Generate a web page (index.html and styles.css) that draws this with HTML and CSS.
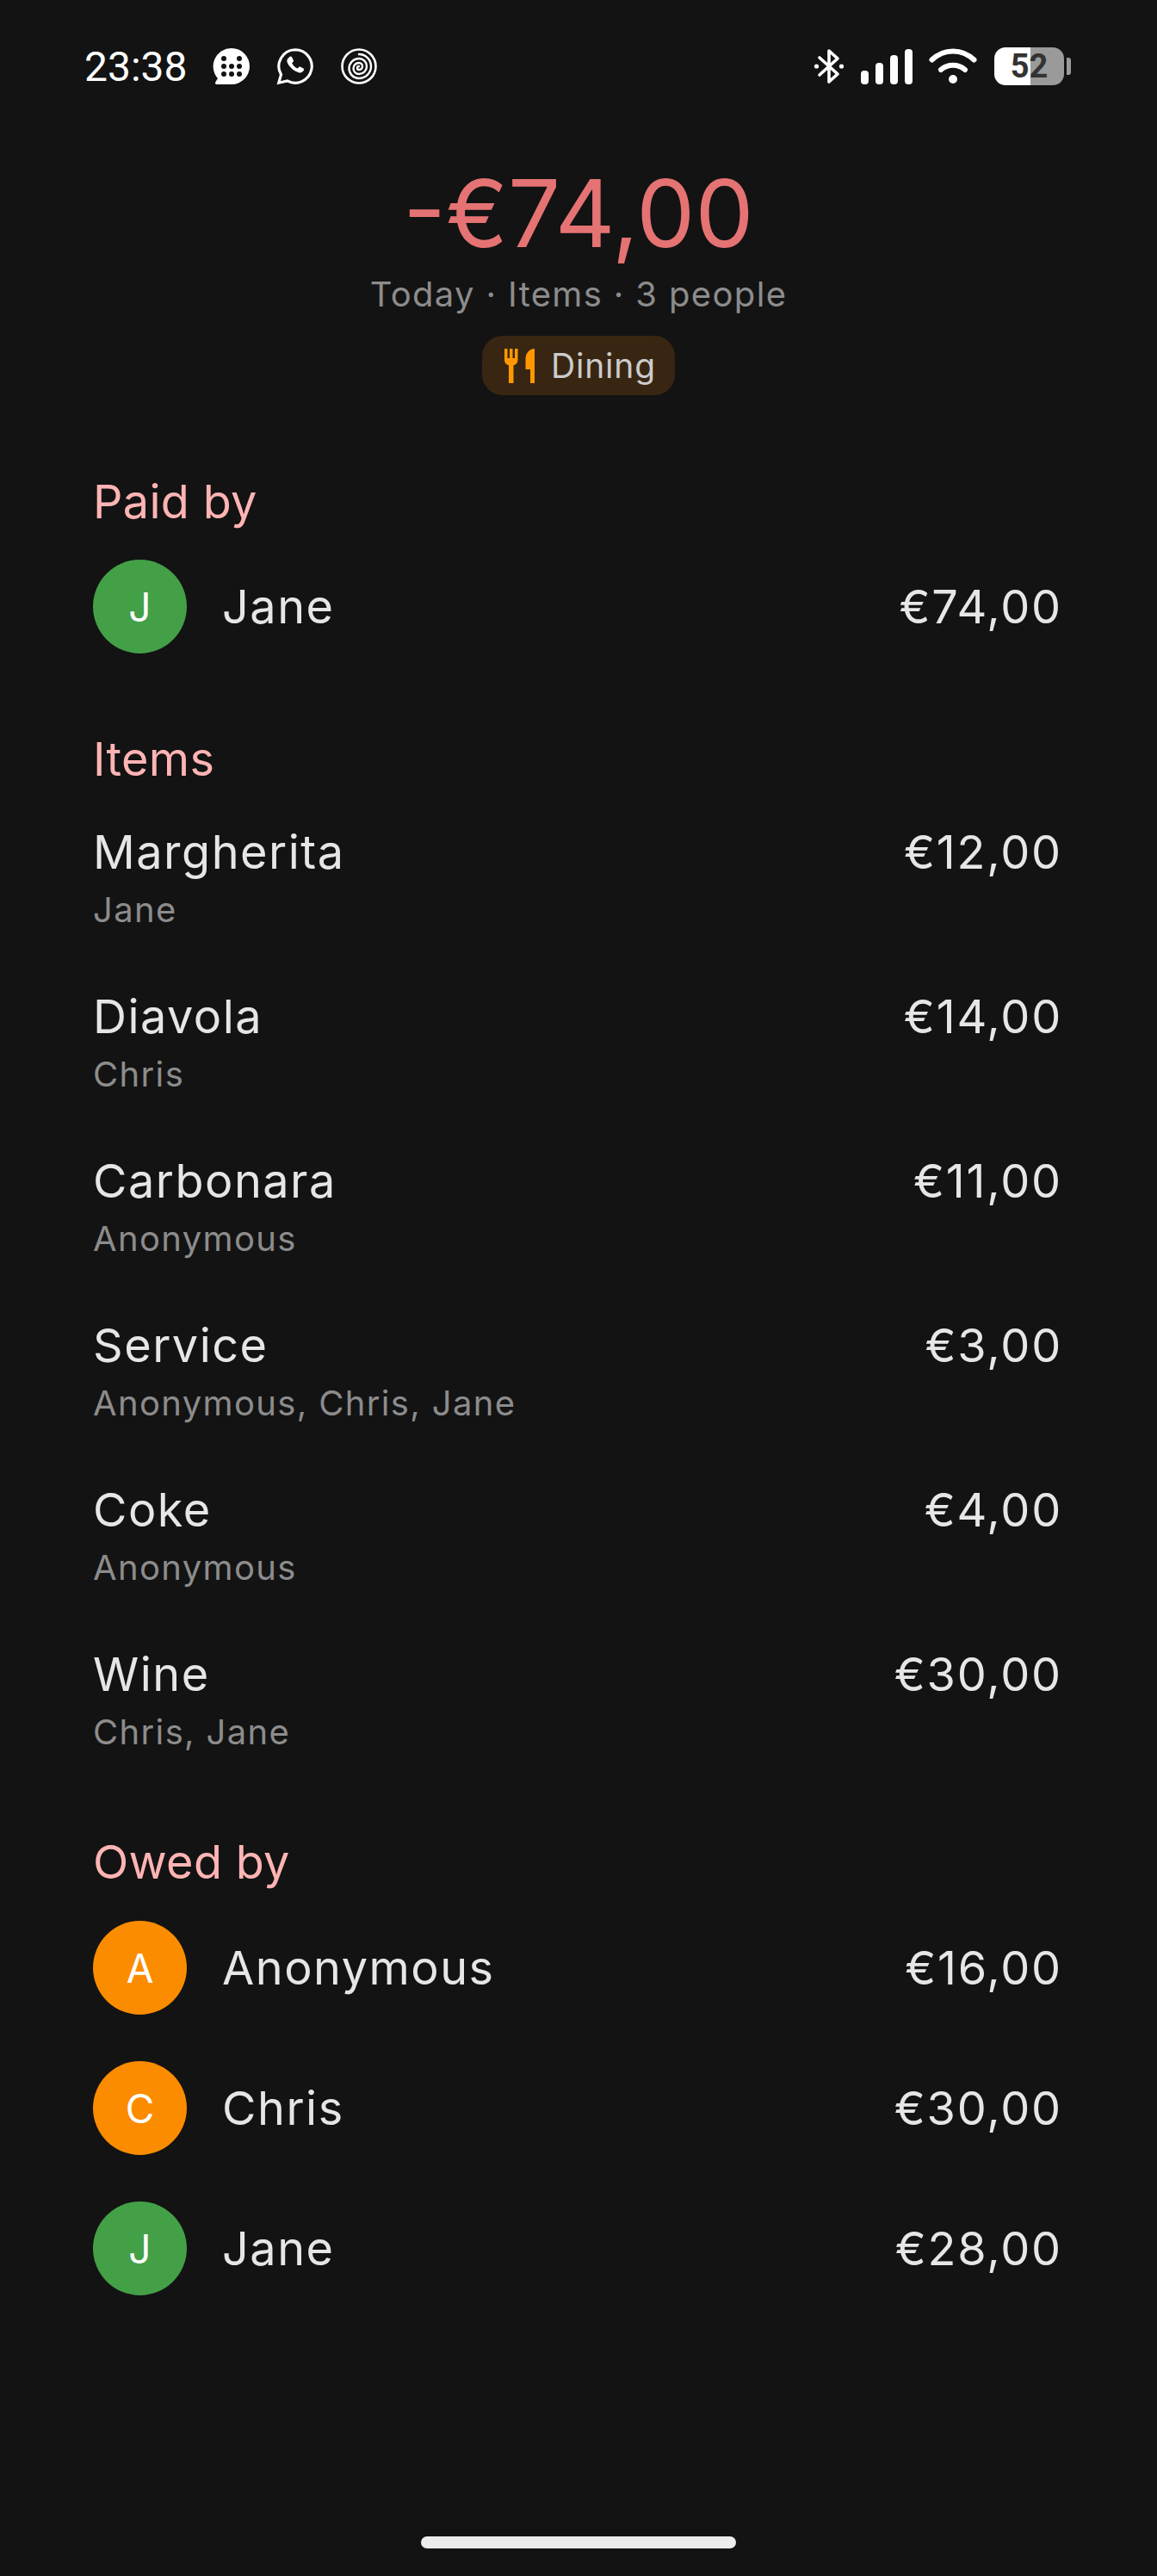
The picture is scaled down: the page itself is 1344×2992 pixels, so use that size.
FILE: index.html
```html
<!DOCTYPE html>
<html lang="en">
<head>
    <meta charset="UTF-8">
    <meta name="viewport" content="width=device-width, initial-scale=1.0">
    <title>Expense details</title>
    <link rel="stylesheet" href="styles.css">
</head>
<body>
    <div class="screen">
        <div class="status-bar">
            <div class="status-left">
                <span class="clock">23:38</span>
                <svg class="notif-icon" viewBox="0 0 44 44">
                    <path fill="#fff" d="M22 1a21 21 0 0 1 0 42H5c-2 0-2.500-1.500-1.500-3L6 36A21 21 0 0 1 22 1z"/>
                    <g fill="#131313">
                        <circle cx="13" cy="13" r="3"/><circle cx="31" cy="13" r="3"/>
                        <circle cx="13" cy="22" r="3"/><circle cx="22" cy="22" r="3"/><circle cx="31" cy="22" r="3"/>
                        <circle cx="13" cy="31" r="3"/><circle cx="22" cy="31" r="3"/><circle cx="31" cy="31" r="3"/>
                    </g>
                </svg>
                <svg class="notif-icon" viewBox="0 0 48 48">
                    <path fill="none" stroke="#fff" stroke-width="3.400" d="M24 3a21 21 0 1 1-10 39.500L3 45l3-10.500A21 21 0 0 1 24 3z"/>
                    <path fill="#fff" d="M17 12c1-.8 2-.6 2.600.3l2 3.700c.5.800.3 1.500-.3 2.200l-1.500 1.600c1.300 3 4 5.600 7 7l1.700-1.700c.6-.6 1.400-.7 2.200-.3l3.600 2c.9.600 1 1.600.4 2.500-1.400 2.300-3.700 3.400-6.400 2.600C21.500 30 15 23.600 13.600 18.400c-.6-2.500.8-5 3.400-6.400z"/>
                </svg>
                <svg class="notif-icon" viewBox="0 0 44 44">
                    <g fill="none" stroke="#fff" stroke-linecap="round">
                        <circle cx="22" cy="22" r="19.500" stroke-width="2.600"/>
                        <path stroke-width="2.400" d="M22 8A14 14 0 0 1 22 36A11.500 11.500 0 0 1 22 13A9 9 0 0 1 22 31A6.500 6.500 0 0 1 22 18A4 4 0 0 1 22 26A2 2 0 0 1 22 22"/>
                    </g>
                </svg>
            </div>
            <div class="status-right">
                <svg class="bt-icon" viewBox="0 0 36 42">
                    <path fill="none" stroke="#fff" stroke-width="3.600" stroke-linejoin="round" stroke-linecap="round" d="M7 11l21 19-10 9V3l10 9L7 31"/>
                    <circle cx="3.500" cy="21" r="2.600" fill="#fff"/><circle cx="32.500" cy="21" r="2.600" fill="#fff"/>
                </svg>
                <div class="signal">
                    <span class="bar bar-1"></span><span class="bar bar-2"></span><span class="bar bar-3"></span><span class="bar bar-4"></span>
                </div>
                <svg class="wifi-icon" viewBox="0 0 56 42">
                    <g fill="none" stroke="#fff" stroke-width="6" stroke-linecap="round">
                        <path d="M3.500 13.500c14-13.500 35-13.500 49 0"/>
                        <path d="M14 25c8-7 20-7 28 0"/>
                    </g>
                    <circle cx="28" cy="36" r="5" fill="#fff"/>
                </svg>
                <div class="battery">
                    <div class="battery-body"><span class="battery-level">52</span></div>
                    <span class="battery-tip"></span>
                </div>
            </div>
        </div>

        <div class="summary">
            <div class="total">-€74,00</div>
            <div class="meta">Today · Items · 3 people</div>
            <div class="chip">
                <svg class="chip-icon" viewBox="0 0 36 40">
                    <path fill="#ff9800" d="M0 0h3.500v11H6V0h3.500v11H12V0h3.500v13c0 3.500-2 5.500-5 6.200V40H5V19.200C2 18.500 0 16.500 0 13zM35 0v40h-5V24h-5.500V12C24.500 5 29 0 35 0z"/>
                </svg>
                <span>Dining</span>
            </div>
        </div>

        <div class="section section-paid">
            <div class="section-title">Paid by</div>
            <div class="person">
                <span class="avatar green">J</span>
                <span class="person-name">Jane</span>
                <span class="amount">€74,00</span>
            </div>
        </div>

        <div class="section section-items">
            <div class="section-title">Items</div>
            <div class="item">
                <div><div class="item-name">Margherita</div><div class="item-people">Jane</div></div>
                <span class="amount">€12,00</span>
            </div>
            <div class="item">
                <div><div class="item-name">Diavola</div><div class="item-people">Chris</div></div>
                <span class="amount">€14,00</span>
            </div>
            <div class="item">
                <div><div class="item-name">Carbonara</div><div class="item-people">Anonymous</div></div>
                <span class="amount">€11,00</span>
            </div>
            <div class="item">
                <div><div class="item-name">Service</div><div class="item-people">Anonymous, Chris, Jane</div></div>
                <span class="amount">€3,00</span>
            </div>
            <div class="item">
                <div><div class="item-name">Coke</div><div class="item-people">Anonymous</div></div>
                <span class="amount">€4,00</span>
            </div>
            <div class="item">
                <div><div class="item-name">Wine</div><div class="item-people">Chris, Jane</div></div>
                <span class="amount">€30,00</span>
            </div>
        </div>

        <div class="section section-owed">
            <div class="section-title">Owed by</div>
            <div class="person">
                <span class="avatar orange">A</span>
                <span class="person-name">Anonymous</span>
                <span class="amount">€16,00</span>
            </div>
            <div class="person">
                <span class="avatar orange">C</span>
                <span class="person-name">Chris</span>
                <span class="amount">€30,00</span>
            </div>
            <div class="person">
                <span class="avatar green">J</span>
                <span class="person-name">Jane</span>
                <span class="amount">€28,00</span>
            </div>
        </div>

        <div class="home-indicator"></div>
    </div>
</body>
</html>
```

FILE: styles.css
```css
html, body {
    margin: 0;
    background-color: #131313;
}
.screen {
    position: relative;
    height: 2992px;
    overflow: hidden;
    box-sizing: border-box;
    font-family: 'Inter', 'Liberation Sans', sans-serif;
    color: #e6e6e6;
}

/* status bar */
.status-bar {
    display: flex;
    justify-content: space-between;
    align-items: center;
    height: 44px;
    padding: 55px 100px 0 98px;
}
.status-left, .status-right {
    display: flex;
    align-items: center;
}
.clock {
    font-family: 'Roboto', sans-serif;
    font-size: 48px;
    color: #fff;
    margin-right: 29px;
}
.notif-icon {
    width: 44px;
    height: 44px;
    margin-right: 30px;
}
.bt-icon {
    width: 36px;
    height: 42px;
    margin-right: 19px;
}
.signal {
    display: flex;
    align-items: flex-end;
    gap: 8px;
    height: 42px;
    margin-right: 19px;
}
.bar {
    width: 9px;
    background-color: #fff;
    border-radius: 4px;
}
.bar-1 { height: 16px; }
.bar-2 { height: 25px; }
.bar-3 { height: 34px; }
.bar-4 { height: 41px; }
.wifi-icon {
    width: 56px;
    height: 42px;
    margin-right: 20px;
}
.battery {
    display: flex;
    align-items: center;
    gap: 3px;
}
.battery-body {
    width: 81px;
    height: 44px;
    border-radius: 13px;
    background: linear-gradient(to right, #fff 52%, #9a9a9a 52%);
    display: flex;
    align-items: center;
    justify-content: center;
}
.battery-level {
    font-family: 'Roboto', sans-serif;
    font-weight: 700;
    font-size: 38px;
    color: #333;
}
.battery-tip {
    width: 5px;
    height: 20px;
    background-color: #9a9a9a;
    border-radius: 0 3px 3px 0;
}

/* header */
.summary {
    display: flex;
    flex-direction: column;
    align-items: center;
    margin-top: 83px;
}
.total {
    font-size: 108px;
    line-height: 132px;
    color: #e57373;
}
.meta {
    font-size: 40px;
    line-height: 56px;
    letter-spacing: 1.350px;
    color: #8c8c8c;
}
.chip {
    display: flex;
    align-items: center;
    gap: 18px;
    height: 69px;
    padding: 0 22px 0 26px;
    margin-top: 20px;
    border-radius: 24px;
    background-color: #392612;
    font-size: 39px;
    letter-spacing: .8px;
    color: #cccccc;
}
.chip-icon {
    width: 36px;
    height: 40px;
}

/* sections */
.section {
    padding: 0 110px 0 108px;
}
.section-paid { margin-top: 92px; }
.section-items { margin-top: 64px; }
.section-owed { margin-top: 36px; }
.section-title {
    font-size: 54px;
    line-height: 64px;
    letter-spacing: .3px;
    color: #ffb4b4;
    margin-bottom: 8px;
}
.section-items .section-title {
    margin-bottom: 35px;
}
.section-owed .section-title {
    margin-bottom: 9px;
}
.person {
    display: flex;
    align-items: center;
    height: 163px;
}
.avatar {
    display: flex;
    align-items: center;
    justify-content: center;
    width: 109px;
    height: 109px;
    border-radius: 50%;
    margin-right: 41px;
    font-size: 46px;
    color: #fff;
}
.green { background-color: #43a047; }
.orange { background-color: #fb8c00; }
.person-name {
    flex: 1;
    font-size: 54px;
    letter-spacing: 1.500px;
}
.amount {
    font-size: 54px;
    letter-spacing: 1.800px;
    color: #e6e6e6;
}
.item {
    display: flex;
    justify-content: space-between;
    align-items: flex-start;
    height: 191px;
}
.item-name {
    font-size: 54px;
    line-height: 81px;
    letter-spacing: 1.500px;
}
.item .amount {
    line-height: 81px;
}
.item-people {
    font-size: 40px;
    line-height: 54px;
    letter-spacing: 1.350px;
    color: #8c8c8c;
}

.home-indicator {
    position: absolute;
    left: 489px;
    bottom: 32px;
    width: 366px;
    height: 14px;
    border-radius: 7px;
    background-color: #ececec;
}
```
